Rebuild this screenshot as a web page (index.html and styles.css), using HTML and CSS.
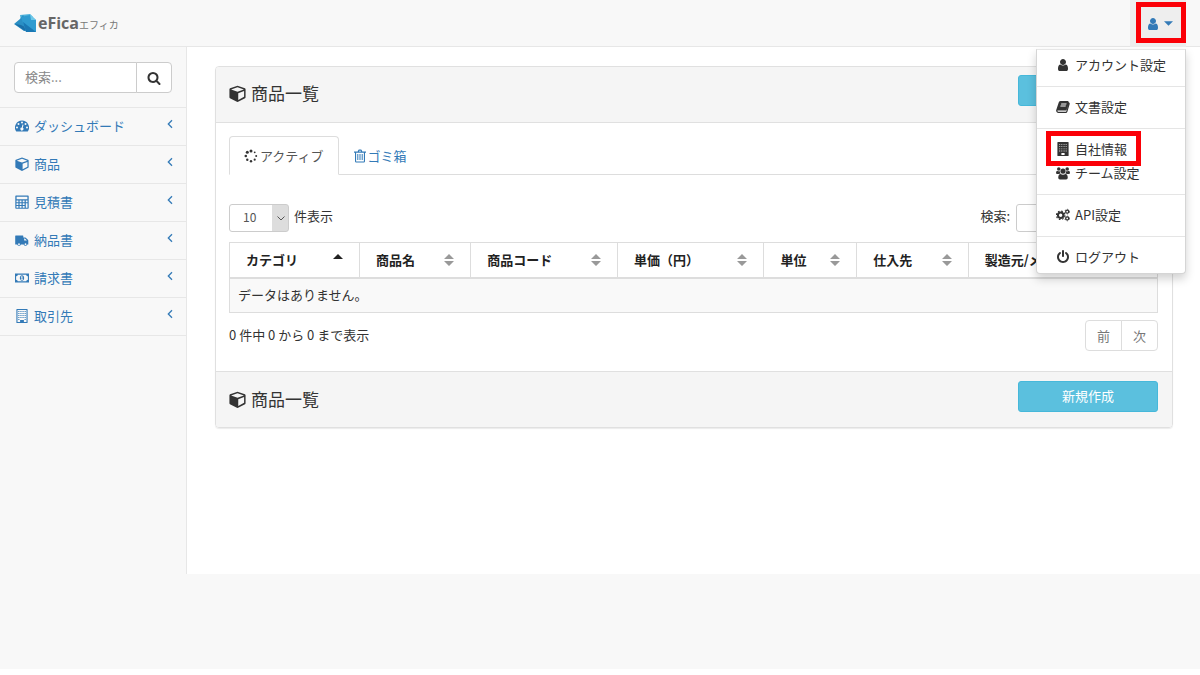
FILE: index.html
```html
<!DOCTYPE html>
<html lang="ja">
<head>
<meta charset="utf-8">
<meta name="viewport" content="width=device-width, initial-scale=1">
<title>商品一覧 - eFica</title>
<link rel="stylesheet" href="styles.css">
</head>
<body>
<svg class="sprite" aria-hidden="true">
  <symbol id="user" viewBox="0 0 1792 1792"><path d="M1536 1399q0 109-62.5 187t-150.5 78h-854q-88 0-150.5-78t-62.5-187q0-85 8.5-160.5t31.5-152 58.5-131 94-89 134.5-34.5q131 128 313 128t313-128q76 0 134.5 34.5t94 89 58.5 131 31.5 152 8.5 160.5zm-256-887q0 159-112.5 271.5t-271.5 112.5-271.5-112.5-112.5-271.5 112.5-271.5 271.5-112.5 271.5 112.5 112.5 271.5z"/></symbol>
  <symbol id="search" viewBox="0 0 1792 1792"><path d="M1216 832q0-185-131.5-316.5t-316.5-131.5-316.5 131.5-131.5 316.5 131.5 316.5 316.5 131.5 316.5-131.5 131.5-316.5zm512 832q0 52-38 90t-90 38q-54 0-90-38l-343-342q-179 124-399 124-143 0-273.5-55.5t-225-150-150-225-55.5-273.5 55.5-273.5 150-225 225-150 273.5-55.5 273.5 55.5 225 150 150 225 55.5 273.5q0 220-124 399l343 343q37 37 37 90z"/></symbol>
  <symbol id="power" viewBox="0 0 1792 1792"><path d="M1664 896q0 156-61 298t-164 245-245 164-298 61-298-61-245-164-164-245-61-298q0-182 80.5-343t226.5-270q43-32 95.5-25t83.5 50q32 42 24.5 94.5t-49.5 84.5q-98 74-151.5 181t-53.5 228q0 104 40.5 198.5t109.5 163.5 163.5 109.5 198.5 40.5 198.5-40.5 163.5-109.5 109.5-163.5 40.5-198.5q0-121-53.5-228t-151.5-181q-42-32-49.5-84.5t24.5-94.5q31-43 84-50t95 25q146 109 226.5 270t80.5 343zm-640-768v640q0 52-38 90t-90 38-90-38-38-90v-640q0-52 38-90t90-38 90 38 38 90z"/></symbol>
  <symbol id="dashboard" viewBox="0 0 14 14"><path fill-rule="evenodd" d="M7 1.500a7 7 0 0 0-5.900 10.800q.2.300.600.300h10.600q.4 0 .6-.3A7 7 0 0 0 7 1.500zM2 7.500a1 1 0 1 0 0 2 1 1 0 0 0 0-2zM3.500 4a1 1 0 1 0 0 2 1 1 0 0 0 0-2zM7 2.500a1 1 0 1 0 0 2 1 1 0 0 0 0-2zM10.500 4a1 1 0 1 0 0 2 1 1 0 0 0 0-2zM12 7.500a1 1 0 1 0 0 2 1 1 0 0 0 0-2zM7.500 5.500l-.7 3a1.500 1.500 0 1 0 1 .3l.7-3z"/></symbol>
  <symbol id="cube" viewBox="0 0 16 16"><path fill-rule="evenodd" d="M8 .6l7 2.500q.6.300.6 1v7.400q0 .6-.5.900L8.600 15.800q-.6.300-1.200 0L.9 12.400q-.5-.3-.5-.9V4.100q0-.7.6-1zM8 2L2 4.200l6 2.200 6-2.200zM8.700 7.700v6.400l5.500-3V5.700z"/></symbol>
  <symbol id="calculator" viewBox="0 0 14 14"><path fill-rule="evenodd" d="M1 .5h12q.7 0 .7.7v11.900q0 .7-.7.7H1q-.7 0-.7-.7V1.200Q.3.500 1 .5zM1.600 1.700v2.500h10.800V1.700zM1.500 5.500v1.700h1.900V5.500zm3.100 0v1.700h1.900V5.500zm3.100 0v1.700h1.900V5.500zm3.100 0v1.700h1.700V5.500zM1.500 8.300V10h1.900V8.300zm3.100 0V10h1.900V8.300zm3.100 0V10h1.900V8.300zM1.500 11.100v1.600h1.900v-1.600zm3.100 0v1.600h1.900v-1.600zm3.100 0v1.600h1.900v-1.600zm3.100-2.800v4.400h1.700V8.300z"/></symbol>
  <symbol id="truck" viewBox="0 0 14 14"><path fill-rule="evenodd" d="M.7 2.500h7.100q.5 0 .5.500v1.500h1.900l.6.200 2.100 2.100.4.700v3.900h-1a1.900 1.900 0 0 1-3.700 0H5.900a1.900 1.900 0 0 1-3.700 0H.2V3q0-.5.500-.5zM9.200 5.500v2h2.700l-2-2zM4 10.300a.9.900 0 1 0 0 1.800.9.900 0 0 0 0-1.800zm6.500 0a.9.900 0 1 0 0 1.800.9.900 0 0 0 0-1.800z"/></symbol>
  <symbol id="money" viewBox="0 0 15 14"><path fill-rule="evenodd" d="M0 2.300h15v9.400H0zM3 3.400Q2.800 5 1.200 5.200v3.600Q2.800 9 3 10.600h9q.2-1.600 1.800-1.800V5.200Q12.200 5 12 3.400zM7.500 4c1.500 0 2.300 1.400 2.300 3s-.8 3-2.300 3-2.300-1.400-2.300-3S6 4 7.500 4zM7 5.200l-.9.800.5.500.3-.2V8h-.7v.8h2.400V8H8V5.200z"/></symbol>
  <symbol id="building-o" viewBox="0 0 14 14"><path fill-rule="evenodd" d="M1.900 0h10.200q.5 0 .5.500v13q0 .5-.5.5H1.900q-.5 0-.5-.5V.5q0-.5.500-.5zM2.500 1v12h2.600v-1.900h3.800V13h2.600V1z"/><path d="M3.300 2h1.100v1H3.300zm2.100 0h1.100v1H5.400zm2.100 0h1.100v1H7.500zm2.100 0h1.100v1H9.600zM3.300 4h1.100v1H3.300zm2.100 0h1.100v1H5.400zm2.100 0h1.100v1H7.500zm2.100 0h1.100v1H9.600zM3.300 6h1.100v1H3.300zm2.100 0h1.100v1H5.400zm2.100 0h1.100v1H7.500zm2.100 0h1.100v1H9.600zM3.300 8h1.100v1H3.300zm2.100 0h1.100v1H5.400zm2.100 0h1.100v1H7.500zm2.100 0h1.100v1H9.600zM3.300 10h1.100v1H3.300zm6.300 0h1.100v1H9.600z"/></symbol>
  <symbol id="building" viewBox="0 0 14 14"><path fill-rule="evenodd" d="M1.900 0h10.200q.5 0 .5.500v13q0 .5-.5.5H1.900q-.5 0-.5-.5V.5q0-.5.500-.5zM3.300 2v.8h.9V2zm2.100 0v.8h.9V2zm2.200 0v.8h.9V2zm2.100 0v.8h.9V2zM3.300 4.200V5h.9v-.8zm2.100 0V5h.9v-.8zm2.200 0V5h.9v-.8zm2.100 0V5h.9v-.8zM3.300 6.400v.8h.9v-.8zm2.100 0v.8h.9v-.8zm2.200 0v.8h.9v-.8zm2.100 0v.8h.9v-.8zM3.300 8.600v.8h.9v-.8zm2.100 0v.8h.9v-.8zm2.200 0v.8h.9v-.8zm2.100 0v.8h.9v-.8zM5.400 11v2h3.200v-2z"/></symbol>
  <symbol id="spinner" viewBox="0 0 14 14"><circle cx="7" cy="1.900" r="1.500"/><circle cx="3.300" cy="3.300" r="1.500"/><circle cx="1.800" cy="7" r="1.300"/><circle cx="3.300" cy="10.700" r="1.200"/><circle cx="7" cy="12.200" r="1.200"/><circle cx="10.700" cy="10.700" r="1.100"/><circle cx="12.200" cy="7" r="1"/><circle cx="10.700" cy="3.300" r=".9"/></symbol>
  <symbol id="trash" viewBox="0 0 14 14"><path fill-rule="evenodd" d="M4.700 2.500l.6-1.400Q5.500.600 6 .6h2q.5 0 .7.500l.6 1.400H13v1.200h-1v8.600q0 1.300-1.200 1.300H3.200Q2 13.600 2 12.300V3.700H1V2.500zm1.200 0h2.200l-.3-.8H6.200zM3.100 3.700v8.200q0 .6.300.6h7.200q.3 0 .3-.6V3.700zM4.300 5h1v6h-1zm2.200 0h1v6h-1zm2.200 0h1v6h-1z"/></symbol>
  <symbol id="book" viewBox="0 0 14 14"><path fill-rule="evenodd" d="M4.700 1h7.100q1 .1.700 1.100l.9.600q.5.500.3 1.300l-2.300 7.700q-.4 1.300-1.700 1.300H2.400Q.7 12.800.2 11.300q-.2-.7.100-1.500L2.800 2.300Q3.300 1 4.700 1zM5.300 3.400L5 4.400h5.300l.3-1zM4.600 5.500L4.300 6.500h5.300l.3-1zM1.500 10.200q-.2 1.500.9 1.600h7.100q.6 0 .8-.5l2.200-7.200-1.900 5.700q-.2.600-.9.600H2.500q-.7 0-1-.2z"/></symbol>
  <symbol id="users" viewBox="0 0 15 14"><circle cx="3" cy="2.800" r="1.900"/><circle cx="12" cy="2.800" r="1.900"/><circle cx="7.500" cy="5" r="2.700"/><path d="M1.300 4.500Q3 5.700 4.100 5q0 1.500 1 2.600Q3.900 7.600 3 8.200H1.300Q0 8.200 0 7q0-2.300 1.300-2.500zM13.700 4.500Q12 5.700 10.900 5q0 1.500-1 2.600 1.200 0 2.100.6h1.700Q15 8.200 15 7q0-2.300-1.300-2.500zM4.900 8.100q2.600 1.700 5.200 0 2.500.2 2.500 4 0 1.900-1.800 1.900H4.200q-1.800 0-1.800-1.900 0-3.800 2.500-4z"/></symbol>
  <symbol id="cogs" viewBox="0 0 15 14"><circle cx="5" cy="7.300" r="2.900" fill="none" stroke="currentColor" stroke-width="2.200"/><circle cx="5" cy="7.300" r="4.500" fill="none" stroke="currentColor" stroke-width="1.300" stroke-dasharray="1.770 1.770"/><circle cx="12" cy="3.400" r="1.600" fill="none" stroke="currentColor" stroke-width="1.400"/><circle cx="12" cy="3.400" r="2.500" fill="none" stroke="currentColor" stroke-width=".8" stroke-dasharray="1.310 1.310"/><circle cx="12" cy="10.700" r="1.600" fill="none" stroke="currentColor" stroke-width="1.400"/><circle cx="12" cy="10.700" r="2.500" fill="none" stroke="currentColor" stroke-width=".8" stroke-dasharray="1.310 1.310"/></symbol>
  <symbol id="angle" viewBox="0 0 6 10"><path d="M5 1.200L1.300 5 5 8.800" fill="none" stroke="currentColor" stroke-width="1.300"/></symbol>
  <symbol id="caret" viewBox="0 0 8 4"><path d="M0 0h8L4 4z"/></symbol>
  <symbol id="sort" viewBox="0 0 10 12"><path d="M0 5l5-5 5 5zM0 7h10l-5 5z"/></symbol>
  <symbol id="sort-asc" viewBox="0 0 10 12"><path d="M0 5l5-5 5 5z"/></symbol>
</svg>

<header class="topbar">
  <a class="brand" href="#">
    <svg class="brand-mark" viewBox="0 0 22 19" aria-hidden="true">
      <path fill="#4fb3dc" d="M6 1l10-1 3 3v7L8 13z"/>
      <path fill="#2a8fc4" d="M0 10l6-5 3-4 8 13-7 3z"/>
      <path fill="#1b6fa8" d="M1 10l6 1 8 4-4 2z"/>
      <path fill="#2f9bd0" d="M7 3l9-2 6 5v12H12z"/>
      <path fill="#1a78b4" d="M12 18L9 8l13 10z"/>
      <path fill="#6cc7e8" d="M16 0l6 6h-5z"/>
    </svg>
    <span class="brand-name">eFica</span><span class="brand-kana">エフィカ</span>
  </a>
  <div class="account">
    <button class="account-toggle" type="button" aria-label="アカウント" aria-expanded="true">
      <svg class="icon"><use href="#user"/></svg><svg class="caret"><use href="#caret"/></svg>
    </button>
    <ul class="menu">
      <li><a href="#"><svg class="icon"><use href="#user"/></svg>アカウント設定</a></li>
      <li class="divider"></li>
      <li><a href="#"><svg class="icon"><use href="#book"/></svg>文書設定</a></li>
      <li class="divider"></li>
      <li class="marked"><a href="#"><svg class="icon"><use href="#building"/></svg>自社情報</a></li>
      <li><a href="#"><svg class="icon"><use href="#users"/></svg>チーム設定</a></li>
      <li class="divider"></li>
      <li><a href="#"><svg class="icon"><use href="#cogs"/></svg>API設定</a></li>
      <li class="divider"></li>
      <li><a href="#"><svg class="icon"><use href="#power"/></svg>ログアウト</a></li>
    </ul>
  </div>
</header>

<div class="layout">
  <nav class="sidebar">
    <form class="side-search">
      <input type="text" placeholder="検索..." aria-label="検索">
      <button type="button" aria-label="検索する"><svg class="icon"><use href="#search"/></svg></button>
    </form>
    <ul class="side-nav">
      <li><a href="#"><svg class="icon"><use href="#dashboard"/></svg>ダッシュボード<svg class="angle"><use href="#angle"/></svg></a></li>
      <li><a href="#"><svg class="icon"><use href="#cube"/></svg>商品<svg class="angle"><use href="#angle"/></svg></a></li>
      <li><a href="#"><svg class="icon"><use href="#calculator"/></svg>見積書<svg class="angle"><use href="#angle"/></svg></a></li>
      <li><a href="#"><svg class="icon"><use href="#truck"/></svg>納品書<svg class="angle"><use href="#angle"/></svg></a></li>
      <li><a href="#"><svg class="icon"><use href="#money"/></svg>請求書<svg class="angle"><use href="#angle"/></svg></a></li>
      <li><a href="#"><svg class="icon"><use href="#building-o"/></svg>取引先<svg class="angle"><use href="#angle"/></svg></a></li>
    </ul>
  </nav>

  <main class="content">
    <section class="panel">
      <div class="panel-bar panel-head">
        <h1 class="panel-title"><svg class="icon-lg"><use href="#cube"/></svg>商品一覧</h1>
        <button class="create" type="button" aria-label="新規作成"></button>
      </div>
      <div class="panel-body">
        <div class="tabs">
          <a class="tab active" href="#"><svg class="icon"><use href="#spinner"/></svg>アクティブ</a>
          <a class="tab" href="#"><svg class="icon"><use href="#trash"/></svg>ゴミ箱</a>
        </div>
        <div class="controls">
          <label class="length"><span class="select-box"><select><option>10</option><option>25</option><option>50</option></select><svg class="chevron" viewBox="0 0 8 5"><path d="M.5.500L4 4 7.500.500" fill="none" stroke="#555"/></svg></span>件表示</label>
          <label class="filter">検索:<input type="search"></label>
        </div>
        <table class="grid">
          <colgroup><col class="c-category"><col class="c-name"><col class="c-code"><col class="c-price"><col class="c-unit"><col class="c-supplier"><col></colgroup>
          <thead>
            <tr>
              <th><div class="th">カテゴリ<svg class="sort asc"><use href="#sort-asc"/></svg></div></th>
              <th><div class="th">商品名<svg class="sort"><use href="#sort"/></svg></div></th>
              <th><div class="th">商品コード<svg class="sort"><use href="#sort"/></svg></div></th>
              <th><div class="th">単価（円）<svg class="sort"><use href="#sort"/></svg></div></th>
              <th><div class="th">単位<svg class="sort"><use href="#sort"/></svg></div></th>
              <th><div class="th">仕入先<svg class="sort"><use href="#sort"/></svg></div></th>
              <th><div class="th">製造元/メ<svg class="sort"><use href="#sort"/></svg></div></th>
            </tr>
          </thead>
          <tbody><tr><td colspan="7">データはありません。</td></tr></tbody>
        </table>
        <div class="summary">
          <span>0 件中 0 から 0 まで表示</span>
          <div class="pager"><button type="button">前</button><button type="button">次</button></div>
        </div>
      </div>
      <div class="panel-bar panel-foot">
        <h2 class="panel-title"><svg class="icon-lg"><use href="#cube"/></svg>商品一覧</h2>
        <button class="create" type="button">新規作成</button>
      </div>
    </section>
  </main>
</div>
<footer class="page-foot"></footer>
</body>
</html>
```

FILE: styles.css
```css
* { box-sizing: border-box; }

body {
  margin: 0;
  background: #fff;
  color: #333;
  font: 13px/20px "Noto Sans CJK JP", "Noto Sans", sans-serif;
}

ul { margin: 0; padding: 0; list-style: none; }
a { color: #337ab7; text-decoration: none; }
button, input, select { font: inherit; color: inherit; }
svg { fill: currentColor; flex: none; }

.sprite { display: none; }
.icon { width: 14px; height: 14px; }
.icon-lg { width: 17px; height: 17px; }

/* Top bar */
.topbar {
  display: flex;
  justify-content: space-between;
  height: 47px;
  padding: 0 14px;
  background: #f8f8f8;
  border-bottom: 1px solid #e7e7e7;
}
.brand { display: flex; align-items: center; color: #777; }
.brand-mark { width: 22px; height: 19px; margin-right: 2px; }
.brand-name { font: bold 16px/20px "Open Sans", sans-serif; color: #666; }
.brand-kana { font-size: 10px; line-height: 16px; padding-top: 4px; }

.account { position: relative; }
.account-toggle {
  position: relative;
  display: flex;
  align-items: center;
  gap: 4px;
  width: 56px;
  height: 47px;
  padding: 0 0 0 16px;
  border: 0;
  background: #eee;
  color: #337ab7;
}
.account-toggle::after {
  content: "";
  position: absolute;
  inset: 2px 0 4px 6px;
  border: 5px solid #fb0007;
}
.caret { width: 9px; height: 5px; }

.menu {
  position: absolute;
  z-index: 10;
  top: 49px;
  right: 0;
  width: 150px;
  padding: 3px 0 4px;
  background: #fff;
  border: 1px solid #d5d5d5;
  border-top-color: #e7e7e7;
  border-radius: 0 0 4px 4px;
  box-shadow: 0 5px 10px rgba(0, 0, 0, .18);
}
.menu a {
  display: flex;
  align-items: center;
  gap: 5px;
  height: 24px;
  padding: 0 19px;
  color: #333;
  white-space: nowrap;
}
.divider { height: 1px; margin: 9px 0 8px; background: #e5e5e5; }
.marked { position: relative; }
.marked::after {
  content: "";
  position: absolute;
  inset: -6px 44px -5px 9px;
  border: 5px solid #fb0007;
}

/* Sidebar */
.layout { display: flex; min-height: 527px; background: #f8f8f8; }
.sidebar { flex: 0 0 186px; min-width: 0; }
.side-search { display: flex; padding: 15px 14px 14px; }
.side-search input {
  flex: 1;
  width: 100%;
  min-width: 0;
  height: 31px;
  padding: 0 10px 2px;
  border: 1px solid #ccc;
  border-radius: 4px 0 0 4px;
  background: #fff;
}
.side-search input::placeholder { color: #888; opacity: 1; }
.side-search button {
  display: flex;
  flex: none;
  align-items: center;
  justify-content: center;
  width: 36px;
  padding: 0;
  margin-left: -1px;
  border: 1px solid #ccc;
  border-radius: 0 4px 4px 0;
  background: #fff;
}
.side-nav { border-top: 1px solid #e7e7e7; }
.side-nav li { border-bottom: 1px solid #e7e7e7; }
.side-nav a {
  display: flex;
  align-items: center;
  gap: 5px;
  height: 37px;
  padding: 0 13px 2px 15px;
}
.angle { width: 6px; height: 10px; margin: 0 0 3px auto; }

/* Product panel */
.content {
  flex: 1;
  min-width: 0;
  padding: 19px 27px 0 28px;
  background: #fff;
  border-left: 1px solid #e7e7e7;
}
.panel {
  border: 1px solid #e0e0e0;
  border-radius: 4px;
  box-shadow: 0 1px 1px rgba(0, 0, 0, .08);
}
.panel-bar {
  display: flex;
  align-items: flex-start;
  justify-content: space-between;
  height: 56px;
  padding: 9px 14px 0 13px;
  background: #f5f5f5;
}
.panel-head { padding-top: 8px; border-bottom: 1px solid #e0e0e0; border-radius: 3px 3px 0 0; }
.panel-foot { border-top: 1px solid #e0e0e0; border-radius: 0 0 3px 3px; }
.panel-title {
  display: flex;
  align-items: center;
  gap: 5px;
  margin: 8px 0 0;
  font-size: 17px;
  line-height: 20px;
  font-weight: 400;
}
.create {
  width: 140px;
  height: 31px;
  padding: 0 0 2px;
  border: 1px solid #46b8da;
  border-radius: 3px;
  background: #5bc0de;
  color: #fff;
}
.panel-body { padding: 13px 14px 20px 13px; }

.tabs { display: flex; border-bottom: 1px solid #ddd; }
.tab {
  display: flex;
  align-items: center;
  gap: 2px;
  height: 39px;
  margin-bottom: -1px;
  padding: 0 14px;
  border: 1px solid transparent;
  border-radius: 4px 4px 0 0;
}
.tab + .tab { padding: 0 13px; gap: 1px; }
.tab.active { color: #555; border-color: #ddd #ddd #fff; background: #fff; }
.tab.active .icon { color: #333; }

.controls {
  display: flex;
  align-items: flex-start;
  justify-content: space-between;
  padding: 29px 0 10px;
}
.length, .filter { display: flex; line-height: 24px; }
.length { gap: 5px; }
.filter { gap: 6px; }
.select-box { position: relative; display: flex; }
.length select {
  appearance: none;
  width: 60px;
  height: 28px;
  padding: 0 13px 2px;
  border: 1px solid #ccc;
  border-radius: 3px;
  background: linear-gradient(#ddd, #ddd) right / 16px 100% no-repeat #fff;
  color: #555;
  font-size: 12px;
}
.chevron { position: absolute; right: 4px; top: 12px; width: 8px; height: 5px; pointer-events: none; }
.filter input {
  width: 142px;
  height: 28px;
  border: 1px solid #ccc;
  border-radius: 3px;
  background: #fff;
}

.grid {
  width: 100%;
  table-layout: fixed;
  border-collapse: collapse;
  border: 1px solid #ddd;
}
.c-category { width: 14%; }
.c-name { width: 12%; }
.c-code { width: 15.8%; }
.c-price { width: 15.8%; }
.c-unit { width: 10%; }
.c-supplier { width: 12%; }
.grid th {
  height: 35px;
  padding: 0 16px;
  border: 1px solid #ddd;
  border-bottom-width: 2px;
  color: #222;
  text-align: left;
  font-weight: 700;
}
.th { display: flex; align-items: center; justify-content: space-between; white-space: nowrap; }
.sort { width: 10px; height: 12px; color: #999; }
.sort.asc { color: #222; }
.grid td { height: 35px; padding: 0 8px; background: #f9f9f9; }

.summary { display: flex; justify-content: space-between; padding-top: 7px; line-height: 30px; }
.pager { display: flex; }
.pager button {
  width: 37px;
  height: 31px;
  padding: 0 0 2px;
  border: 1px solid #ddd;
  background: #fff;
  color: #777;
}
.pager button:first-child { border-radius: 4px 0 0 4px; }
.pager button:last-child { margin-left: -1px; border-radius: 0 4px 4px 0; }

.page-foot { height: 95px; background: #f8f8f8; }
```
